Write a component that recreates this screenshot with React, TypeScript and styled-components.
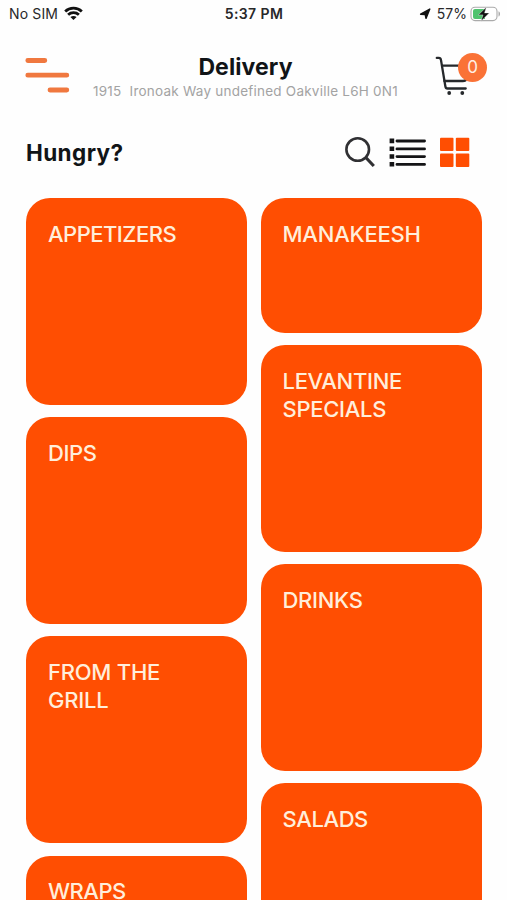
import React from "react";
import styled, { createGlobalStyle } from "styled-components";

const GlobalStyle = createGlobalStyle`
  * { box-sizing: border-box; }
  html, body { margin: 0; background: #fefefe; overflow: hidden; }
`;

const Screen = styled.main`
  width: 507px;
  height: 900px;
  overflow: hidden;
  display: flex;
  flex-direction: column;
  background: #fefefe;
  color: #111417;
  font-family: Inter, "Liberation Sans", sans-serif;
`;

const StatusBar = styled.div`
  height: 28px;
  flex: none;
  padding: 0 6px 0 9px;
  display: grid;
  grid-template-columns: 1fr auto 1fr;
  align-items: center;
  font-size: 14px;
  line-height: 28px;
  color: #28282a;
`;

const Carrier = styled.div`
  display: flex;
  align-items: center;
  gap: 6px;
  letter-spacing: 0.15px;
  svg { margin-top: -2px; }
`;

const Clock = styled.div`
  margin-left: -2px;
  font-weight: 600;
  letter-spacing: 0.4px;
`;

const Power = styled.div`
  display: flex;
  align-items: center;
  justify-content: flex-end;
  svg { flex: none; }
`;

const Percent = styled.span`
  margin: 0 3px 0 6px;
  letter-spacing: 0;
`;

const Header = styled.header`
  height: 92px;
  flex: none;
  padding: 0 20px 0 25px;
  display: grid;
  grid-template-columns: 45px 1fr 53px;
`;

const MenuButton = styled.button`
  width: 45px;
  height: 36px;
  margin-top: 29px;
  padding: 0;
  border: 0;
  background: none;
  svg { display: block; }
`;

const Destination = styled.div`
  padding: 24px 13px 0 0;
  display: flex;
  flex-direction: column;
  align-items: center;
  white-space: nowrap;
`;

const Title = styled.h1`
  margin: 0;
  font-size: 23px;
  line-height: 30px;
  font-weight: 700;
  letter-spacing: 0.1px;
`;

const Address = styled.p`
  margin: 0;
  font-size: 13.5px;
  line-height: 18px;
  color: #a3a3a3;
  white-space: pre;
  letter-spacing: 0.23px;
`;

const CartButton = styled.button`
  position: relative;
  width: 53px;
  height: 44px;
  margin-top: 25px;
  padding: 0;
  border: 0;
  background: none;
  svg { display: block; }
`;

const Badge = styled.span`
  position: absolute;
  top: 0;
  right: 0;
  width: 29px;
  height: 29px;
  border-radius: 50%;
  background: #fa7236;
  color: #fff0e6;
  font: 400 17px/29px Inter, sans-serif;
  text-align: center;
`;

const Toolbar = styled.div`
  height: 78px;
  flex: none;
  padding: 16px 37.5px 0 26px;
  display: flex;
  align-items: flex-start;
  justify-content: space-between;
`;

const Prompt = styled.h2`
  margin: 1px 0 0;
  font-size: 22.5px;
  line-height: 32px;
  font-weight: 700;
  letter-spacing: 0.4px;
`;

const Actions = styled.div`
  display: flex;
  gap: 14px;
  svg { display: block; }
`;

const Menu = styled.section`
  display: grid;
  grid-template-columns: 221px 221px;
  column-gap: 13.5px;
  padding-left: 26px;
`;

const Column = styled.div`
  display: flex;
  flex-direction: column;
  gap: 12.4px;
`;

const Card = styled.article<{ $short?: boolean }>`
  flex: none;
  height: ${({ $short }) => ($short ? 134.7 : 206.8)}px;
  padding: 21.7px 50px 0 22px;
  border-radius: 24px;
  background: #ff4e02;
`;

const Category = styled.h3<{ $spacing: number }>`
  margin: 0;
  color: #ffeedb;
  font-size: 22px;
  line-height: 28px;
  font-weight: 500;
  letter-spacing: ${({ $spacing }) => $spacing}px;
  white-space: pre;
`;

type Item = { name: string; short?: boolean; spacing: number };

const columns: Item[][] = [
  [
    { name: "APPETIZERS", spacing: -0.52 },
    { name: "DIPS", spacing: -0.4 },
    { name: "FROM THE\nGRILL", spacing: -0.25 },
    { name: "WRAPS", spacing: -0.5 },
  ],
  [
    { name: "MANAKEESH", short: true, spacing: -0.22 },
    { name: "LEVANTINE\nSPECIALS", spacing: -0.3 },
    { name: "DRINKS", spacing: -0.3 },
    { name: "SALADS", spacing: -0.4 },
  ],
];

const WifiIcon = () => (
  <svg width="19" height="14" viewBox="0 0 19 14" fill="none" stroke="#111" strokeWidth="2.8">
    <path d="M1.2 5.4C5.8.9 13.2.9 17.8 5.4" />
    <path d="M4.1 8.8c3-2.8 7.8-2.8 10.8 0" />
    <path d="M9.5 14 6.4 11.1c1.7-1.6 4.5-1.6 6.2 0Z" fill="#111" stroke="none" />
  </svg>
);

const LocationIcon = () => (
  <svg width="12" height="12" viewBox="0 0 12 12">
    <path d="M10.8 1 7 10.4 6.2 6.5 1.6 6.2Z" fill="#111" stroke="#111" strokeWidth="1.4" strokeLinejoin="round" />
  </svg>
);

const BatteryIcon = () => (
  <svg width="31" height="16" viewBox="0 0 31 16">
    <rect x="1" y="1.2" width="26" height="13.4" rx="4" fill="#fff" stroke="#aaa" strokeWidth="1.1" />
    <path d="M5 3h10v10H5a2 2 0 0 1-2-2V5a2 2 0 0 1 2-2Z" fill="#4fc36e" />
    <path d="M28.5 5.2c2 .9 2 4.5 0 5.4Z" fill="#aaa" />
    <path d="m16.5 1-8.2 7.9h4.7l-2 6.3 8.3-8.3h-4.8Z" fill="#111" stroke="#fff" strokeWidth=".4" />
  </svg>
);

const MenuIcon = () => (
  <svg width="45" height="36" viewBox="0 0 45 36" fill="none" stroke="#f0783f" strokeWidth="4.8" strokeLinecap="round">
    <path d="M2.8 3.5h17M2.8 18.2h39M25 33h16.8" />
  </svg>
);

const CartIcon = () => (
  <svg width="53" height="46" viewBox="0 0 53 46" fill="none" stroke="#25282b" strokeWidth="2.3" strokeLinecap="round" strokeLinejoin="round">
    <path d="M2.8 4.9h2c1.4 0 2 1 2.2 2.2l4.4 26.4c.2 1.3.7 2 2 2h18.3" />
    <path d="M8.4 12.6H33M10.4 28h18.4c2.3 0 3.3-.8 3.7-2.6l3-12.4" />
    <circle cx="15.2" cy="40" r="1.9" fill="#25282b" stroke="none" />
    <circle cx="28.3" cy="40" r="1.9" fill="#25282b" stroke="none" />
  </svg>
);

const SearchIcon = () => (
  <svg width="31" height="32" viewBox="0 0 31 32" fill="none" stroke="#303033" strokeWidth="2.6">
    <circle cx="13.7" cy="13.5" r="11.3" />
    <path d="m21.8 21.5 8 8.5" strokeWidth="3.2" />
  </svg>
);

const ListIcon = () => (
  <svg width="37" height="32" viewBox="0 0 37 32" stroke="#141416" strokeWidth="2.9" strokeLinecap="round">
    <path d="M8 5h27.5M8 12.9h27.5M8 20.6h27.5M8 28.4h27.5" />
    <path d="M.6 2.6h4.6v4.6H.6ZM.6 10.5h4.6v4.6H.6ZM.6 18.2h4.6v4.6H.6ZM.6 26h4.6v4.6H.6Z" fill="#141416" stroke="none" />
  </svg>
);

const GridIcon = () => (
  <svg width="30" height="32" viewBox="0 0 30 32" fill="#ff4e02">
    <rect x="0" y="1.8" width="13.5" height="13.3" rx="1" />
    <rect x="15.8" y="1.8" width="13.5" height="13.3" rx="1" />
    <rect x="0" y="17.6" width="13.5" height="13.4" rx="1" />
    <rect x="15.8" y="17.6" width="13.5" height="13.4" rx="1" />
  </svg>
);

export default function App() {
  return (
    <Screen>
      <GlobalStyle />
      <StatusBar>
        <Carrier>No SIM <WifiIcon /></Carrier>
        <Clock>5:37 PM</Clock>
        <Power><LocationIcon /><Percent>57%</Percent><BatteryIcon /></Power>
      </StatusBar>
      <Header>
        <MenuButton aria-label="Menu"><MenuIcon /></MenuButton>
        <Destination>
          <Title>Delivery</Title>
          <Address>{"1915  Ironoak Way undefined Oakville L6H 0N1"}</Address>
        </Destination>
        <CartButton aria-label="Cart"><CartIcon /><Badge>0</Badge></CartButton>
      </Header>
      <Toolbar>
        <Prompt>Hungry?</Prompt>
        <Actions><SearchIcon /><ListIcon /><GridIcon /></Actions>
      </Toolbar>
      <Menu>
        {columns.map((items, index) => (
          <Column key={index}>
            {items.map((item) => (
              <Card key={item.name} $short={item.short}>
                <Category $spacing={item.spacing}>{item.name}</Category>
              </Card>
            ))}
          </Column>
        ))}
      </Menu>
    </Screen>
  );
}
